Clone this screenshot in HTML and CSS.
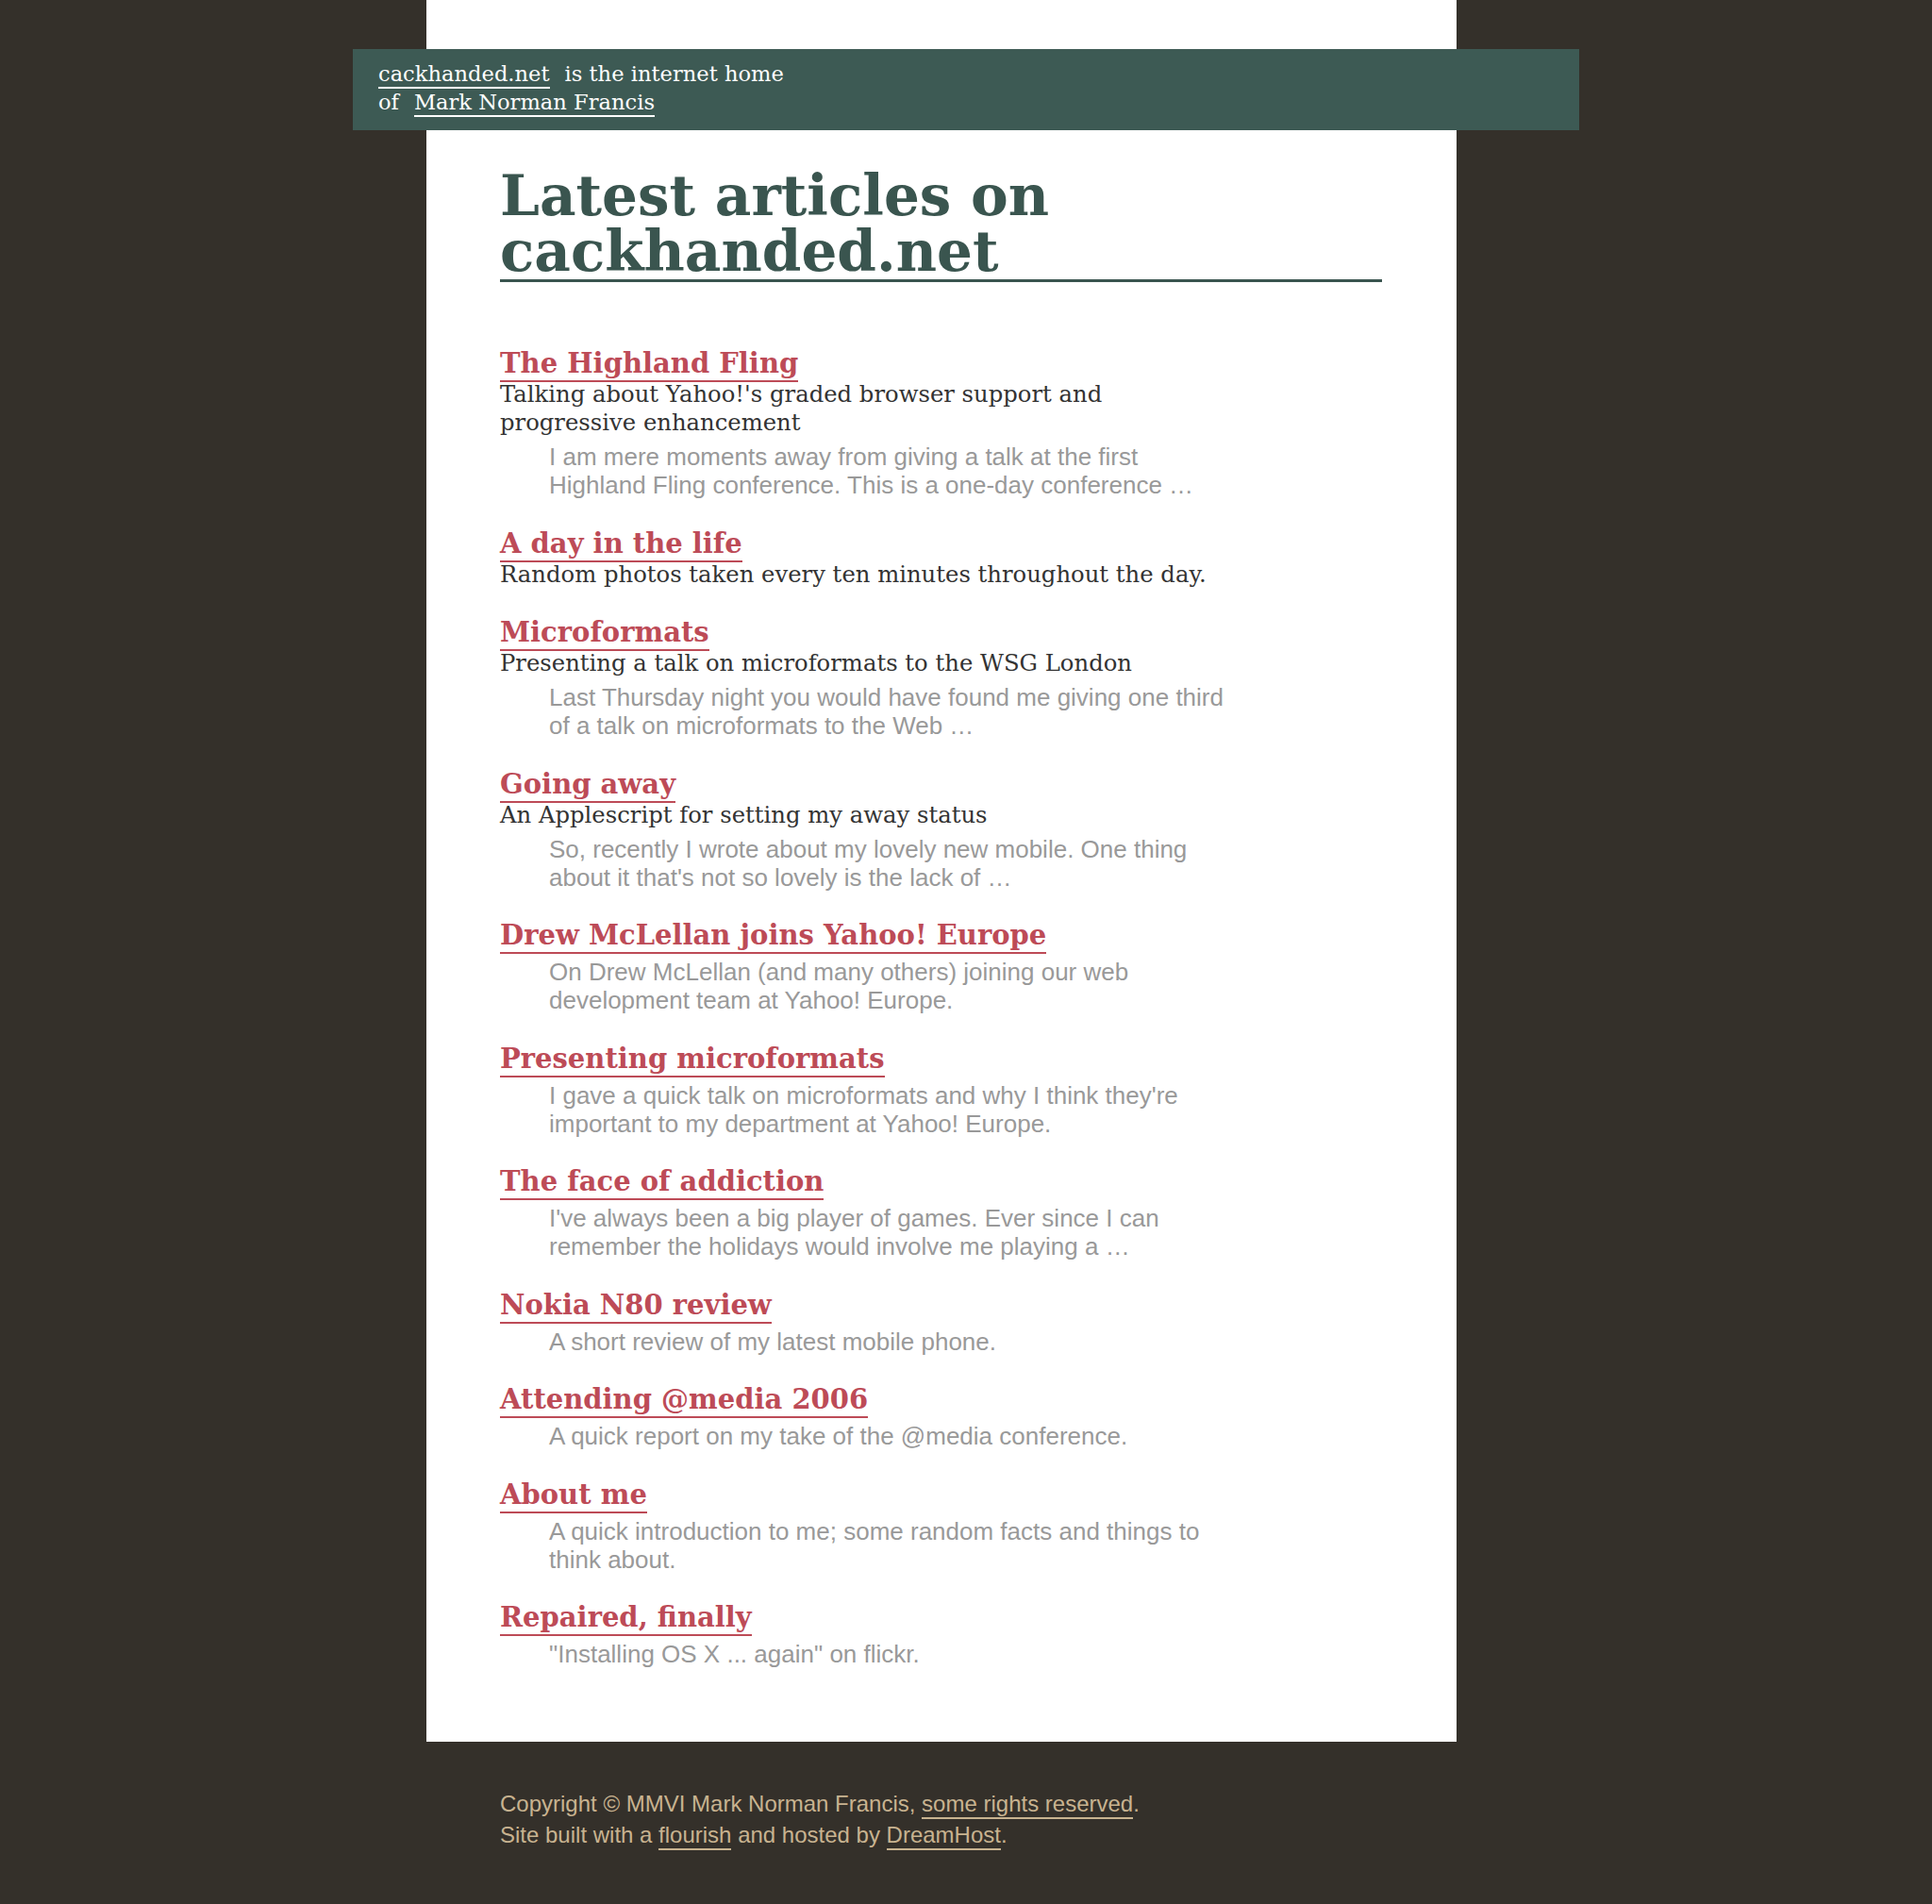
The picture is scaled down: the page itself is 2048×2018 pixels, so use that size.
FILE: index.html
```html
<!DOCTYPE html>
<html lang="en">
<head>
<meta charset="utf-8">
<title>Latest articles on cackhanded.net</title>
<link rel="stylesheet" href="styles.css">
</head>
<body>
<div class="page">
  <div class="masthead">
    <p class="masthead-text"><a class="masthead-link first" href="#">cackhanded.net</a>is the internet home<br>of<a class="masthead-link" href="#">Mark Norman Francis</a></p>
  </div>
  <div class="content">
    <h1 class="page-title">Latest articles on cackhanded.net</h1>
    <div class="articles">
      <div class="article">
        <h2 class="article-title"><a href="#">The Highland Fling</a></h2>
        <p class="summary">Talking about Yahoo!'s graded browser support and progressive enhancement</p>
        <p class="excerpt">I am mere moments away from giving a talk at the first Highland Fling conference. This is a one-day conference …</p>
      </div>
      <div class="article">
        <h2 class="article-title"><a href="#">A day in the life</a></h2>
        <p class="summary">Random photos taken every ten minutes throughout the day.</p>
      </div>
      <div class="article">
        <h2 class="article-title"><a href="#">Microformats</a></h2>
        <p class="summary">Presenting a talk on microformats to the WSG London</p>
        <p class="excerpt">Last Thursday night you would have found me giving one third of a talk on microformats to the Web …</p>
      </div>
      <div class="article">
        <h2 class="article-title"><a href="#">Going away</a></h2>
        <p class="summary">An Applescript for setting my away status</p>
        <p class="excerpt">So, recently I wrote about my lovely new mobile. One thing about it that's not so lovely is the lack of …</p>
      </div>
      <div class="article">
        <h2 class="article-title"><a href="#">Drew McLellan joins Yahoo! Europe</a></h2>
        <p class="excerpt">On Drew McLellan (and many others) joining our web development team at Yahoo! Europe.</p>
      </div>
      <div class="article">
        <h2 class="article-title"><a href="#">Presenting microformats</a></h2>
        <p class="excerpt">I gave a quick talk on microformats and why I think they're important to my department at Yahoo! Europe.</p>
      </div>
      <div class="article">
        <h2 class="article-title"><a href="#">The face of addiction</a></h2>
        <p class="excerpt">I've always been a big player of games. Ever since I can remember the holidays would involve me playing a …</p>
      </div>
      <div class="article">
        <h2 class="article-title"><a href="#">Nokia N80 review</a></h2>
        <p class="excerpt">A short review of my latest mobile phone.</p>
      </div>
      <div class="article">
        <h2 class="article-title"><a href="#">Attending @media 2006</a></h2>
        <p class="excerpt">A quick report on my take of the @media conference.</p>
      </div>
      <div class="article">
        <h2 class="article-title"><a href="#">About me</a></h2>
        <p class="excerpt">A quick introduction to me; some random facts and things to think about.</p>
      </div>
      <div class="article">
        <h2 class="article-title"><a href="#">Repaired, finally</a></h2>
        <p class="excerpt">"Installing OS X ... again" on flickr.</p>
      </div>
    </div>
  </div>
</div>
<div class="footer">
  <p class="footer-line">Copyright © MMVI Mark Norman Francis, <a href="#">some rights reserved</a>.</p>
  <p class="footer-line">Site built with a <a href="#">flourish</a> and hosted by <a href="#">DreamHost</a>.</p>
</div>
</body>
</html>
```

FILE: styles.css
```css
html, body {
  margin: 0;
  padding: 0;
}
body {
  background: #34302a;
  font-family: "Liberation Sans", Arial, sans-serif;
}
.page {
  margin-left: 452px;
  width: 1092px;
  background: #ffffff;
  padding-top: 52px;
  padding-bottom: 49px;
}
.masthead {
  background: #3d5a54;
  margin-left: -78px;
  margin-right: -130px;
  padding: 11px 27px 15px;
}
.masthead-text {
  margin: 0;
  font-family: "DejaVu Serif", serif;
  font-size: 22.6px;
  line-height: 30px;
  color: #ffffff;
}
.masthead-link {
  color: #ffffff;
  text-decoration: none;
  border-bottom: 2px solid #ffffff;
  padding-bottom: 1px;
  margin: 0 16px;
}
.masthead-link.first {
  margin-left: 0;
}
.content {
  padding: 0 79px 0 78px;
}
.page-title {
  margin: 40px 0 0;
  font-family: "DejaVu Serif", serif;
  font-weight: bold;
  font-size: 59.6px;
  line-height: 59px;
  color: #3a554f;
  border-bottom: 3px solid #3a554f;
}
.articles {
  max-width: 780px;
  padding-top: 68px;
}
.article {
  margin-bottom: 28.5px;
}
.article-title {
  margin: 0;
  font-family: "DejaVu Serif", serif;
  font-weight: bold;
  font-size: 29px;
  line-height: 36px;
}
.article-title a {
  color: #bd4b57;
  text-decoration: none;
  border-bottom: 2px solid #bd4b57;
  padding-bottom: 1px;
}
.summary {
  margin: 0;
  font-family: "DejaVu Serif", serif;
  font-size: 24.3px;
  line-height: 30px;
  color: #333333;
}
.excerpt {
  margin: 6px 0 0 52px;
  font-size: 26px;
  line-height: 30px;
  color: #999999;
}
.footer {
  padding: 49px 0 57px 530px;
}
.footer-line {
  margin: 0;
  font-size: 24px;
  line-height: 33px;
  color: #c8b390;
}
.footer-line a {
  color: #c8b390;
  text-decoration: none;
  border-bottom: 2px solid #c8b390;
  padding-bottom: 1px;
}
```
